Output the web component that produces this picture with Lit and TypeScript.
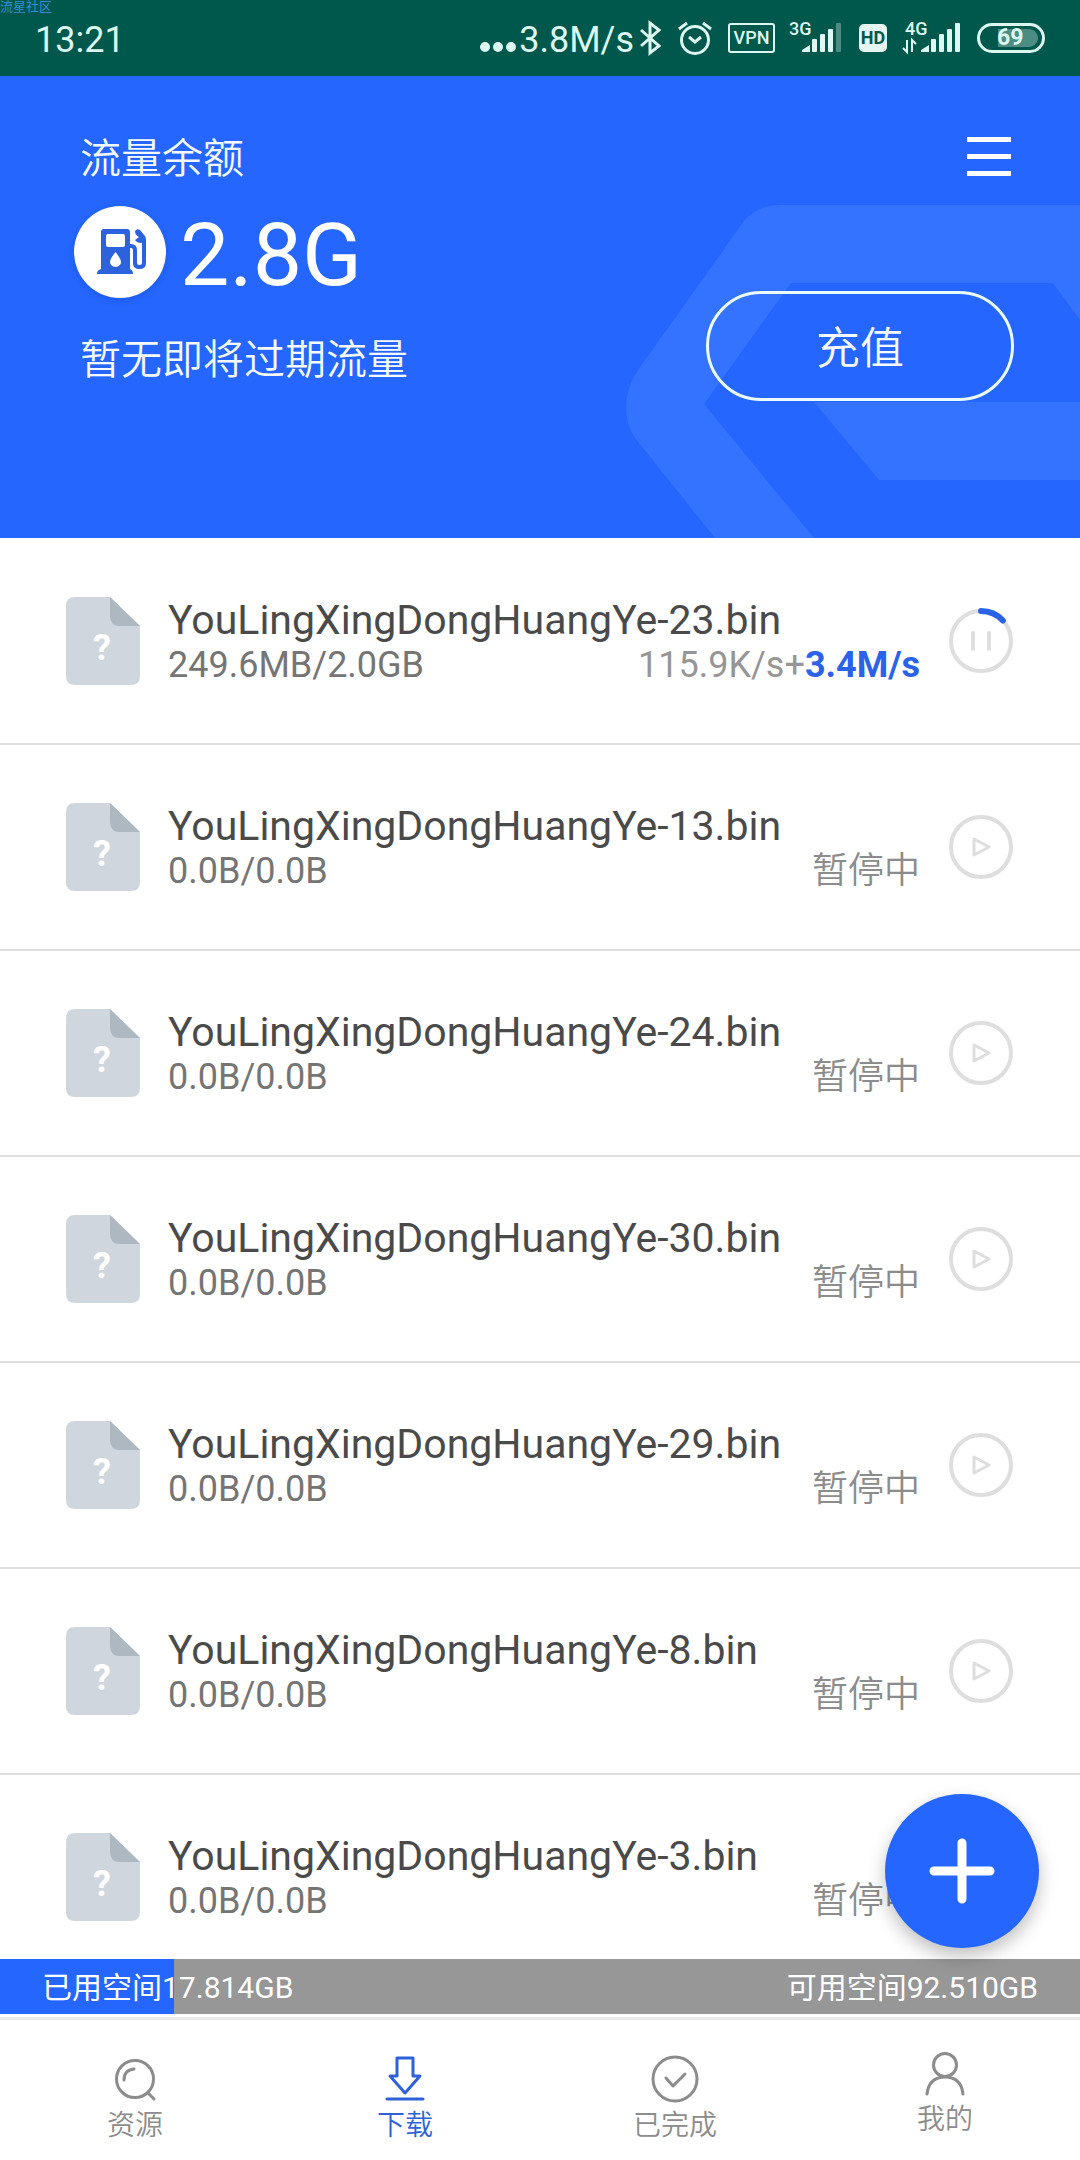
import { LitElement, html, svg, css, nothing } from "lit";
import { customElement, property, state } from "lit/decorators.js";
import { classMap } from "lit/directives/class-map.js";

interface Task {
  name: string;
  size: string;
  /** Finished share, 0 to 1; only running tasks have one. */
  progress?: number;
  speed?: string;
  boost?: string;
}

const TASKS: Task[] = [
  { name: "YouLingXingDongHuangYe-23.bin", size: "249.6MB/2.0GB", progress: 0.13, speed: "115.9K/s", boost: "3.4M/s" },
  { name: "YouLingXingDongHuangYe-13.bin", size: "0.0B/0.0B" },
  { name: "YouLingXingDongHuangYe-24.bin", size: "0.0B/0.0B" },
  { name: "YouLingXingDongHuangYe-30.bin", size: "0.0B/0.0B" },
  { name: "YouLingXingDongHuangYe-29.bin", size: "0.0B/0.0B" },
  { name: "YouLingXingDongHuangYe-8.bin", size: "0.0B/0.0B" },
  { name: "YouLingXingDongHuangYe-3.bin", size: "0.0B/0.0B" },
];

const USED_GB = 17.814;
const FREE_GB = 92.51;

const BAR_HEIGHTS = [13, 18, 23, 29];

@customElement("status-bar")
class StatusBar extends LitElement {
  static styles = css`
    :host {
      position: relative;
      display: flex;
      align-items: center;
      justify-content: space-between;
      height: 76px;
      padding: 0 35px;
      background: #00574b;
      color: #dcf8f0;
    }
    .mark {
      position: absolute;
      left: 0;
      top: 0;
      font-size: 13px;
      line-height: 13px;
      color: #2e8fd8;
    }
    .clock,
    .rate {
      font-size: 36px;
      line-height: 42px;
      padding-top: 4px;
    }
    .group,
    .net {
      display: flex;
      align-items: center;
    }
    .group {
      gap: 16px;
    }
    .net {
      gap: 4px;
    }
    .vpn {
      box-sizing: border-box;
      width: 47px;
      border: 2px solid;
      border-radius: 3px;
      text-align: center;
      font-size: 18px;
      line-height: 26px;
      font-weight: 500;
    }
    svg {
      display: block;
      flex: none;
      overflow: visible;
    }
    text {
      font-size: 18px;
      font-weight: 500;
    }
    .hd {
      width: 28px;
      border-radius: 5px;
      background: #e6f5f1;
      color: #00574b;
      text-align: center;
      font-size: 18px;
      line-height: 28px;
      font-weight: 700;
    }
    .battery {
      box-sizing: border-box;
      width: 68px;
      border: 3px solid;
      border-radius: 15px;
      padding: 3px 4px;
      font-size: 23px;
      line-height: 18px;
      font-weight: 700;
    }
    .charge {
      display: block;
      padding-left: 13px;
      border-radius: 9px;
      background: linear-gradient(90deg, transparent 26%, #4b8d82 26%);
    }
  `;

  private bars(x: number, dimLast: boolean) {
    return svg`
      <path d="M${x} 30v-2l8-5v7z" fill="currentColor"/>
      ${BAR_HEIGHTS.map(
        (h, i) => svg`<rect x=${x + 10 + i * 8} y=${30 - h} width="5" height=${h} rx="1"
          fill=${dimLast && i === 3 ? "#4b8d82" : "currentColor"}/>`,
      )}`;
  }

  render() {
    return html`
      <span class="mark">流星社区</span>
      <span class="clock">13:21</span>
      <div class="group">
        <div class="net">
          <svg width="36" height="30" viewBox="0 0 36 30" fill="currentColor">
            <circle cx="6" cy="24" r="5" /><circle cx="19" cy="24" r="5" /><circle cx="32" cy="24" r="5" />
          </svg>
          <span class="rate">3.8M/s</span>
          <svg width="24" height="36" viewBox="0 0 24 36" fill="none" stroke="currentColor" stroke-width="3">
            <path d="M3 10l18 16-9 7V3l9 7L3 26" />
          </svg>
        </div>
        <svg width="34" height="34" viewBox="0 0 34 34" fill="none" stroke="currentColor" stroke-width="3">
          <circle cx="17" cy="19" r="13.5" />
          <path d="M1 8l8-6M33 8l-8-6M11 16l6 5 6-5" />
        </svg>
        <span class="vpn">VPN</span>
        <svg width="52" height="40" viewBox="2 -4 52 40">
          <text x="0" y="13" fill="currentColor">3G</text>
          ${this.bars(13, true)}
        </svg>
        <span class="hd">HD</span>
        <svg width="58" height="40" viewBox="0 -4 58 40">
          <text x="2" y="13" fill="currentColor">4G</text>
          <path d="M4 18v12l-4-4M9 30V18l4 4" fill="none" stroke="currentColor" stroke-width="2" />
          ${this.bars(18, false)}
        </svg>
        <span class="battery"><span class="charge">69</span></span>
      </div>
    `;
  }
}

@customElement("balance-panel")
class BalancePanel extends LitElement {
  static styles = css`
    :host {
      position: relative;
      display: flex;
      justify-content: space-between;
      padding: 59px 66px 137px 74px;
      background: #2466ff;
      color: #f4faff;
    }
    .emblem {
      position: absolute;
      right: 0;
      bottom: 0;
    }
    .info,
    .actions {
      position: relative;
      display: flex;
      flex-direction: column;
    }
    .note {
      padding-left: 6px;
      font-size: 41px;
      line-height: 48px;
      font-weight: 350;
    }
    .amount {
      display: flex;
      align-items: flex-start;
      gap: 14px;
      margin: 23px 0 32px;
      font-size: 88px;
      line-height: 98px;
      color: #fff;
    }
    .badge {
      display: block;
      border-radius: 50%;
      background: #fff;
      box-shadow: 0 2px 6px rgba(20, 50, 160, 0.25);
    }
    .actions {
      align-items: flex-end;
      gap: 110px;
    }
    button {
      margin: 0;
      padding: 0;
      border: 0;
      background: none;
      font: inherit;
      color: inherit;
    }
    .menu svg {
      display: block;
    }
    .recharge {
      box-sizing: border-box;
      width: 308px;
      height: 110px;
      padding-top: 6px;
      border: 3px solid #eafcff;
      border-radius: 55px;
      font-size: 44px;
      line-height: 52px;
      font-weight: 350;
    }
  `;

  render() {
    return html`
      <svg class="emblem" width="454" height="333" viewBox="626 205 454 333" fill="#3373ff" aria-hidden="true">
        <path d="M1080 205H781Q757 205 744 221L638 370Q626 388 626 408Q626 425 635 438L715 538H814L704 404L791 283H1053L1080 320Z" />
        <path d="M814 402H1080V480H879Z" />
      </svg>
      <div class="info">
        <span class="note">流量余额</span>
        <div class="amount">
          <svg class="badge" width="92" height="92" viewBox="0 0 92 92" fill="none">
            <path fill="#2c62dc" d="M27 26q0-3 3-3h23q3 0 3 3v37q3 1 3 5H23q0-4 4-5z" />
            <rect x="32" y="28" width="19" height="13" rx="2" fill="#fff" />
            <path d="M41.500 46q-5.500 7-5.500 10a5.500 5 0 0 0 11 0q0-3-5.500-10z" fill="#fff" />
            <path d="M55 40h2q4 0 4 4v13q0 4 4.500 4t4.500-4V33" stroke="#2c62dc" stroke-width="4" />
            <path fill="#2c62dc" d="M61 25q2-3 5-1l5 6q1 1 1 5l-5 2q-4 0-6-3l4-3q-4-2-4-6z" />
          </svg>
          <span>2.8G</span>
        </div>
        <span class="note">暂无即将过期流量</span>
      </div>
      <div class="actions">
        <button class="menu" aria-label="菜单">
          <svg width="50" height="46" viewBox="0 0 50 46" fill="#fff">
            <path d="M3 2h44v5H3zM3 19h44v5H3zM3 36h44v5H3z" />
          </svg>
        </button>
        <button class="recharge">充值</button>
      </div>
    `;
  }
}

@customElement("task-row")
class TaskRow extends LitElement {
  @property({ attribute: false }) task!: Task;

  static styles = css`
    :host {
      display: flex;
      align-items: center;
      height: 204px;
      padding: 0 66px;
      border-bottom: 2px solid #dfdfdf;
    }
    .file {
      flex: none;
      margin-right: 28px;
    }
    .body {
      flex: 1;
      min-width: 0;
    }
    .name {
      font-size: 41px;
      line-height: 48px;
      color: #4a4a4a;
      white-space: nowrap;
    }
    .meta {
      display: flex;
      justify-content: space-between;
      font-size: 36px;
      line-height: 42px;
      color: #757575;
    }
    .state {
      color: #969696;
    }
    .paused {
      font-weight: 350;
      color: #8c8c8c;
    }
    .boost {
      font-weight: 700;
      color: #2b62ea;
    }
    .toggle {
      flex: none;
      margin: 0 0 0 28px;
      padding: 0;
      border: 0;
      background: none;
    }
    .toggle svg,
    .file {
      display: block;
    }
    .mark {
      font-size: 36px;
      font-weight: 700;
    }
  `;

  render() {
    const { name, size, progress, speed, boost } = this.task;
    const running = progress !== undefined;
    return html`
      <svg class="file" width="74" height="88" viewBox="0 0 74 88">
        <path d="M9 0h35l30 29v50q0 9-9 9H9q-9 0-9-9V9q0-9 9-9z" fill="#cfd6dd" />
        <path d="M44 0l30 29H54q-10 0-10-10z" fill="#adb8c0" />
        <text class="mark" x="36" y="63" text-anchor="middle" fill="#fff">?</text>
      </svg>
      <div class="body">
        <div class="name">${name}</div>
        <div class="meta">
          <span>${size}</span>
          <span class=${classMap({ state: true, paused: !running })}
            >${running ? html`${speed}+<span class="boost">${boost}</span>` : "暂停中"}</span
          >
        </div>
      </div>
      <button class="toggle" aria-label=${running ? "暂停" : "继续"}>
        <svg width="66" height="66" viewBox="0 0 66 66" fill="none" stroke-linecap="round" stroke-linejoin="round">
          <circle cx="33" cy="33" r="30" stroke="#dedede" stroke-width="4" />
          ${running
            ? svg`<circle cx="33" cy="33" r="30" stroke="#2b62ea" stroke-width="6" pathLength="100"
                stroke-dasharray="${progress! * 100} 100" transform="rotate(-90 33 33)"/>
              <path d="M25 25v16M41 25v16" stroke="#dedede" stroke-width="4"/>`
            : svg`<path d="M26 25v16l15-8z" stroke="#dedede" stroke-width="3"/>`}
        </svg>
      </button>
    `;
  }
}

@customElement("storage-bar")
class StorageBar extends LitElement {
  static styles = css`
    :host {
      position: relative;
      display: flex;
      justify-content: space-between;
      padding: 9px 42px 6px;
      background: #979797;
      color: #fff;
      font-size: 30px;
      line-height: 40px;
    }
    .fill {
      position: absolute;
      left: 0;
      top: 0;
      bottom: 0;
      background: #2466ff;
    }
    .label {
      position: relative;
    }
  `;

  render() {
    const share = (USED_GB / (USED_GB + FREE_GB)) * 100;
    return html`
      <div class="fill" style="width: ${share}%"></div>
      <span class="label">已用空间${USED_GB.toFixed(3)}GB</span>
      <span class="label">可用空间${FREE_GB.toFixed(3)}GB</span>
    `;
  }
}

const TABS = [
  {
    label: "资源",
    icon: html`<svg width="50" height="50" viewBox="0 0 50 50">
      <circle cx="25" cy="25" r="18.5" /><path d="M14 26q0-10 10-11M38 39l6 6" />
    </svg>`,
  },
  {
    label: "下载",
    icon: html`<svg width="50" height="50" viewBox="0 0 50 50">
      <path d="M17 4h16v18h7L25 39 10 22h7zM7 45h36" />
    </svg>`,
  },
  {
    label: "已完成",
    icon: html`<svg width="50" height="50" viewBox="0 0 50 50">
      <circle cx="25" cy="25" r="22" /><path d="M16 24l7 8 12-12" />
    </svg>`,
  },
  {
    label: "我的",
    icon: html`<svg width="50" height="44" viewBox="0 0 50 44">
      <circle cx="25" cy="11" r="11.500" /><path d="M7 40q2-17 18-17t18 17" />
    </svg>`,
  },
];

@customElement("tab-bar")
class TabBar extends LitElement {
  @state() private active = 1;

  static styles = css`
    :host {
      display: grid;
      grid-template-columns: repeat(4, 1fr);
      align-items: start;
      height: 106px;
      padding-top: 34px;
      border-top: 3px solid #e9e9e9;
      background: #fff;
    }
    a {
      display: flex;
      flex-direction: column;
      align-items: center;
      text-decoration: none;
      font-size: 28px;
      line-height: 44px;
      font-weight: 350;
      color: #8c8c8c;
    }
    a.on {
      color: #2f62d8;
    }
    svg {
      display: block;
      overflow: visible;
      fill: none;
      stroke: currentColor;
      stroke-width: 3px;
      stroke-linecap: round;
      stroke-linejoin: round;
    }
  `;

  render() {
    return TABS.map(
      (t, i) => html`
        <a
          href="#"
          class=${classMap({ on: i === this.active })}
          aria-current=${i === this.active ? "page" : nothing}
          @click=${(e: Event) => {
            e.preventDefault();
            this.active = i;
          }}
        >
          ${t.icon}<span>${t.label}</span>
        </a>
      `,
    );
  }
}

@customElement("app-root")
class AppRoot extends LitElement {
  static styles = css`
    :host {
      display: flex;
      flex-direction: column;
      height: 100vh;
      background: #fff;
      font-family: Roboto, "Noto Sans CJK SC", sans-serif;
    }
    status-bar,
    balance-panel,
    storage-bar,
    tab-bar {
      flex: none;
    }
    .main {
      position: relative;
      flex: 1;
      min-height: 0;
      display: flex;
    }
    .list {
      flex: 1;
      overflow-y: auto;
      scrollbar-width: none;
      padding-top: 1px;
    }
    storage-bar {
      margin-bottom: 3px;
    }
    .add {
      position: absolute;
      z-index: 1;
      right: 41px;
      bottom: 11px;
      width: 154px;
      height: 154px;
      padding: 0;
      border: 0;
      border-radius: 50%;
      background: #2466ff;
      box-shadow: 0 8px 18px rgba(0, 0, 0, 0.25);
    }
    .add svg {
      display: block;
      margin: auto;
    }
  `;

  render() {
    return html`
      <status-bar></status-bar>
      <balance-panel></balance-panel>
      <div class="main">
        <div class="list">${TASKS.map((t) => html`<task-row .task=${t}></task-row>`)}</div>
        <button class="add" aria-label="新建下载">
          <svg width="66" height="66" viewBox="0 0 66 66" stroke="#fff" stroke-width="9" stroke-linecap="round">
            <path d="M33 5v56M5 33h56" />
          </svg>
        </button>
      </div>
      <storage-bar></storage-bar>
      <tab-bar></tab-bar>
    `;
  }
}
